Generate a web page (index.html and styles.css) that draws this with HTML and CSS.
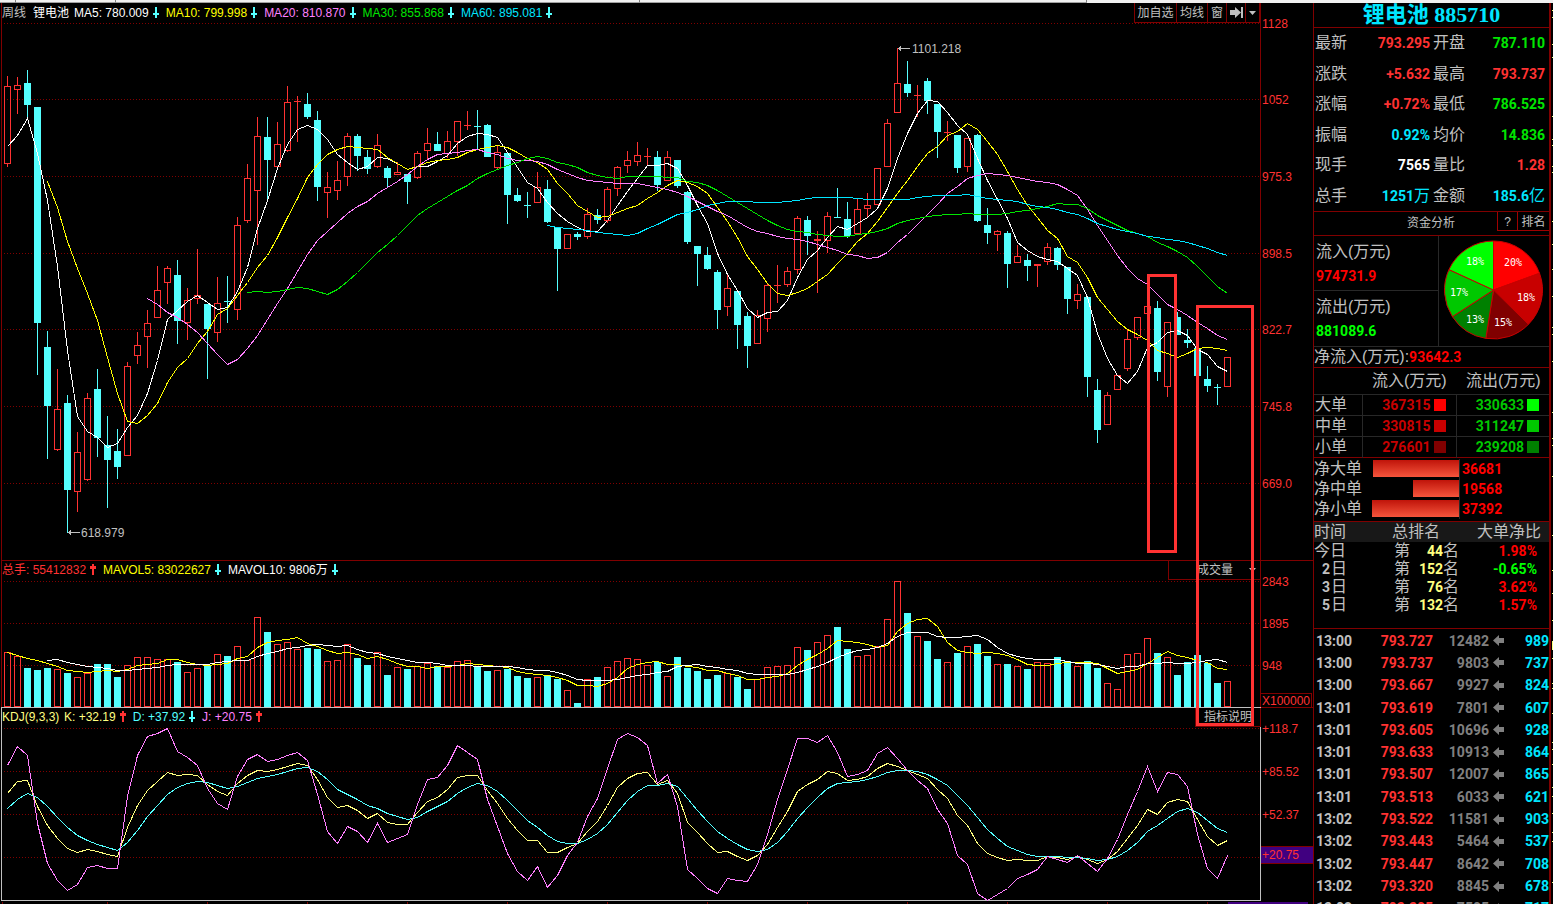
FILE: index.html
```html
<!DOCTYPE html>
<html lang="zh-CN">
<head>
<meta charset="utf-8">
<title>锂电池 885710</title>
<link rel="stylesheet" href="styles.css">
</head>
<body>
<svg class="defs" aria-hidden="true">
  <symbol id="down" viewBox="0 0 7 12"><path d="M3 0h2v6h2v2H5v3H3V8H1V6h2z" fill="#54ffff"/></symbol>
  <symbol id="up" viewBox="0 0 7 12"><path d="M3 0h2v2h2v3H5v6H3V5H1V2h2z" fill="#ff3232"/></symbol>
  <symbol id="back" viewBox="0 0 12 11"><path d="M0 5.5 6 0v3h5v5H6v3z" fill="#808080"/></symbol>
</svg>
<div class="strip"><i></i><i></i><i></i><i></i></div>
<div class="app">
  <main class="charts">
    <section class="pane">
      <svg id="price" class="plot" viewBox="0 3 1313 557"></svg>
      <header class="legend">
        <span class="gray period">周线</span><span class="white name">锂电池</span>
        <span class="item white">MA5: 780.009<svg class="arr"><use href="#down"/></svg></span>
        <span class="item yellow">MA10: 799.998<svg class="arr"><use href="#down"/></svg></span>
        <span class="item pink">MA20: 810.870<svg class="arr"><use href="#down"/></svg></span>
        <span class="item green">MA30: 855.868<svg class="arr"><use href="#down"/></svg></span>
        <span class="item aqua">MA60: 895.081<svg class="arr"><use href="#down"/></svg></span>
      </header>
      <nav class="tools">
        <button class="wide">加自选</button><button class="mid">均线</button><button class="small">窗</button>
        <button class="small" aria-label="最新"><svg width="13" height="11"><path d="M0 3h5V0l6 5.5L5 11V8H0zM11 0h2v11h-2z" fill="#c0c0c0"/></svg></button>
        <button class="tiny" aria-label="更多"><svg width="7" height="4"><path d="M0 0h7L3.5 4z" fill="#c0c0c0"/></svg></button>
      </nav>
    </section>
    <section class="pane">
      <svg id="volume" class="plot" viewBox="0 560 1313 147"></svg>
      <header class="legend">
        <span class="item red">总手: 55412832<svg class="arr"><use href="#up"/></svg></span>
        <span class="item yellow">MAVOL5: 83022627<svg class="arr"><use href="#down"/></svg></span>
        <span class="item white">MAVOL10: 9806万<svg class="arr"><use href="#down"/></svg></span>
      </header>
      <div class="picker">
        <select aria-label="指标"><option>成交量</option></select>
        <svg width="7" height="4"><path d="M0 0h7L3.5 4z" fill="#c0c0c0"/></svg>
      </div>
    </section>
    <section class="pane">
      <svg id="kdj" class="plot" viewBox="0 707 1313 197"></svg>
      <header class="legend">
        <span class="cream kdj">KDJ(9,3,3)</span>
        <span class="item cream">K: +32.19<svg class="arr"><use href="#up"/></svg></span>
        <span class="item cyan">D: +37.92<svg class="arr"><use href="#down"/></svg></span>
        <span class="item pink">J: +20.75<svg class="arr"><use href="#up"/></svg></span>
      </header>
      <button class="explain">指标说明</button>
    </section>
    <svg class="marks" viewBox="0 3 1313 901">
      <rect x="1148.5" y="275.5" width="27" height="276"/>
      <rect x="1197.5" y="306.5" width="55" height="418"/>
    </svg>
  </main>
  <aside class="side">
    <h1>锂电池 885710</h1>
    <dl class="quote">
      <dt>最新</dt><dd class="red">793.295</dd><dt>开盘</dt><dd class="green">787.110</dd>
      <dt>涨跌</dt><dd class="red">+5.632</dd><dt>最高</dt><dd class="red">793.737</dd>
      <dt>涨幅</dt><dd class="red">+0.72%</dd><dt>最低</dt><dd class="green">786.525</dd>
      <dt>振幅</dt><dd class="aqua">0.92%</dd><dt>均价</dt><dd class="green">14.836</dd>
      <dt>现手</dt><dd class="white">7565</dd><dt>量比</dt><dd class="red">1.28</dd>
      <dt>总手</dt><dd class="aqua">1251<span class="unit">万</span></dd><dt>金额</dt><dd class="aqua">185.6<span class="unit">亿</span></dd>
    </dl>
    <div class="tabs"><span>资金分析</span><button class="help">?</button><button class="rank-btn">排名</button></div>
    <div class="flow">
      <div class="flow-in"><span>流入(万元)</span><b class="pure-red">974731.9</b></div>
      <div class="flow-out"><span>流出(万元)</span><b class="pure-green">881089.6</b></div>
      <svg id="pie" class="pie" width="110" height="110"></svg>
    </div>
    <div class="net">净流入(万元):<b class="pure-red">93642.3</b></div>
    <table class="orders">
      <thead><tr><th></th><th>流入(万元)</th><th>流出(万元)</th></tr></thead>
      <tbody>
        <tr><th>大单</th><td class="in">367315<i class="r1"></i></td><td class="out">330633<i class="g1"></i></td></tr>
        <tr><th>中单</th><td class="in">330815<i class="r2"></i></td><td class="out">311247<i class="g2"></i></td></tr>
        <tr><th>小单</th><td class="in">276601<i class="r3"></i></td><td class="out">239208<i class="g3"></i></td></tr>
      </tbody>
    </table>
    <div class="nets">
      <div><span>净大单</span><span class="track"><i style="width:86px"></i></span><b>36681</b></div>
      <div><span>净中单</span><span class="track"><i style="width:46px"></i></span><b>19568</b></div>
      <div><span>净小单</span><span class="track"><i style="width:87px"></i></span><b>37392</b></div>
    </div>
    <table class="ranks">
      <thead><tr><th>时间</th><th class="c">总排名</th><th class="r">大单净比</th></tr></thead>
      <tbody>
        <tr><td>今日</td><td class="c"><span class="place">第<b>44</b>名</span></td><td class="r pure-red">1.98%</td></tr>
        <tr><td class="n"><b>2</b>日</td><td class="c"><span class="place">第<b>152</b>名</span></td><td class="r pure-green">-0.65%</td></tr>
        <tr><td class="n"><b>3</b>日</td><td class="c"><span class="place">第<b>76</b>名</span></td><td class="r pure-red">3.62%</td></tr>
        <tr><td class="n"><b>5</b>日</td><td class="c"><span class="place">第<b>132</b>名</span></td><td class="r pure-red">1.57%</td></tr>
      </tbody>
    </table>
    <div id="ticks" class="ticks"></div>
  </aside>
  <svg class="edge" aria-hidden="true"><path d="M1.5 7v1m0 6v1m0 26v1m0 12v1m0 58v1m0 22v1m0 5v1m0 20v1m0 5v1m0 48v1m0 22v1m0 24v1m0 26v1m0 30v1m0 6v1m0 26v1m0 50v1m0 25v1m0 6v1m0 30v1m0 58v1m0 34v1m0 22v1m0 26v1m0 20v9m0 8v1m0 24v1m0 4v1m0 24v1m0 28v1m0 6v1m0 14v1m0 22v1m0 8v1m0 16v1m0 18v1m0 8v1m0 40v1"/></svg>
</div>
<script src="chart.js"></script>
</body>
</html>
```
FILE: styles.css
```css
* { box-sizing: border-box; }
body {
  margin: 0;
  height: 100vh;
  overflow: hidden;
  background: #000;
  color: #c0c0c0;
  font: 12px/18px "Liberation Sans", "Noto Sans CJK SC", sans-serif;
}
button, select {
  margin: 0;
  padding: 0;
  background: transparent;
  border: 0;
  color: #c0c0c0;
  font: inherit;
}
.defs { position: absolute; width: 0; height: 0; }
.red { color: #ff3232; }
.green { color: #00e600; }
.pure-red { color: #ff0000; }
.pure-green { color: #00ff00; }
.yellow { color: #ffff00; }
.pink { color: #ff80ff; }
.aqua { color: #00e6ff; }
.cyan { color: #54ffff; }
.cream { color: #ffff80; }
.white { color: #ffffff; }
.gray { color: #c0c0c0; }

.strip { display: flex; height: 3px; background: #f0f0f0; }
.strip i { flex: 0 0 auto; border-bottom: 1px solid #a0a0a0; border-right: 1px solid #808080; }
.strip i:nth-child(1) { width: 16px; }
.strip i:nth-child(2) { width: 100px; }
.strip i:nth-child(3) { width: 524px; }
.strip i:nth-child(4) { width: 447px; }

.app { display: grid; grid-template-columns: minmax(0, 1fr) 238px 2px; height: calc(100vh - 3px); }
.charts { position: relative; }
.pane { position: relative; }
.plot { display: block; width: 100%; height: auto; font-size: 12px; }
.plot rect, .plot path, .plot polyline { shape-rendering: crispEdges; }
.marks { position: absolute; left: 0; top: 0; width: 100%; height: auto; pointer-events: none; }
.marks rect { fill: none; stroke: #ff3232; stroke-width: 3; shape-rendering: crispEdges; }

.legend { position: absolute; left: 2px; top: 1px; display: flex; white-space: nowrap; }
.period { width: 31px; }
.name { width: 41px; }
.kdj { width: 62px; }
.item { display: flex; align-items: center; margin-right: 7px; }
.arr { width: 7px; height: 12px; margin-left: 3px; }

.tools { position: absolute; right: 53px; top: 0; display: flex; height: 20px; border: 1px solid #800000; border-top: 0; }
.tools button { display: flex; align-items: center; justify-content: center; border-left: 1px solid #800000; }
.tools button:first-child { border-left: 0; }
.tools .wide { width: 41px; }
.tools .mid { width: 31px; }
.tools .small { width: 19px; }
.tools .tiny { width: 14px; }
.picker { position: absolute; right: 52px; top: 0; width: 93px; height: 20px; border: 1px solid #800000; display: flex; align-items: center; }
.picker select { flex: 1; appearance: none; padding-left: 28px; outline: 0; }
.picker svg { margin-right: 4px; }
.explain { position: absolute; right: 52px; top: 1px; width: 66px; height: 19px; border: 1px solid #800000; border-top: 0; text-align: right; padding-right: 8px; }

.side { border-left: 1px solid #800000; border-right: 2px solid #800000; font-size: 16px; line-height: 20px; overflow: hidden; }
.side b, .quote dd, .orders td, .ranks .r, .ticks { font-family: Roboto, "Noto Sans CJK SC", sans-serif; font-weight: 700; font-size: 14px; }
h1 { margin: 0; height: 25px; border-bottom: 1px solid #800000; text-align: center; font: 700 22px/24px "Liberation Serif", "Noto Sans CJK SC", serif; color: #00e6ff; }
.quote { margin: 0; height: 184px; padding: 0 4px 0 1px; display: grid; grid-template-columns: 34px 1fr 36px 79px; grid-template-rows: repeat(6, 1fr); align-items: center; border-bottom: 1px solid #800000; }
.quote dd { margin: 0; text-align: right; }
.quote dt:nth-of-type(even) { padding-left: 3px; }
.unit { font-size: 16px; font-weight: 400; }
.tabs { display: flex; height: 24px; border-bottom: 1px solid #800000; font-size: 12px; }
.tabs span { flex: 1; text-align: right; padding-right: 42px; line-height: 23px; }
.tabs button { height: 19px; border: 1px solid #a00000; border-top: 0; border-right: 0; }
.help { width: 20px; }
.rank-btn { width: 32px; }
.flow { display: grid; grid-template-columns: 125px 1fr; grid-template-rows: 55px 55px; border-bottom: 1px solid #282828; }
.flow > div { border-right: 1px solid #282828; padding: 6px 0 0 2px; display: flex; flex-direction: column; gap: 4px; }
.flow .flow-in { border-bottom: 1px solid #282828; }
.flow-out { grid-row: 2; }
.pie { grid-column: 2; grid-row: 1 / 3; font: 10px "DejaVu Sans Mono", monospace; }
.net { height: 21px; border-bottom: 1px solid #800000; white-space: nowrap; line-height: 20px; }
table { border-collapse: collapse; border-spacing: 0; table-layout: fixed; width: 100%; }
th { font-weight: 400; text-align: left; }
th, td { padding: 0; }
.orders { border-bottom: 1px solid #800000; }
.orders th:first-child { width: 48px; padding-left: 1px; }
.orders th:nth-child(2) { width: 94px; }
.orders thead th { height: 26px; padding-left: 10px; white-space: nowrap; }
.orders tbody th, .orders td { height: 21px; line-height: 18px; border-top: 1px solid #282828; }
.orders td { border-left: 1px solid #282828; text-align: right; white-space: nowrap; }
.orders .in { color: #c80000; padding-right: 10px; }
.orders .out { color: #00c800; padding-right: 10px; }
.orders i { display: inline-block; width: 12px; height: 12px; margin-left: 3px; vertical-align: -1px; }
.r1 { background: #ff0000; } .r2 { background: #c80000; } .r3 { background: #800000; }
.g1 { background: #00ff00; } .g2 { background: #00c800; } .g3 { background: #008000; }
.nets { padding: 1px 0 2px; border-bottom: 1px solid #800000; }
.nets > div { display: grid; grid-template-columns: 50px 96px 1fr; height: 20px; align-items: center; }
.track { display: flex; justify-content: flex-end; align-items: center; height: 20px; border-right: 1px solid #282828; }
.track i { height: 17px; background: linear-gradient(#c0140a, #f5553c); }
.nets b { color: #ff0000; padding-left: 2px; }
.ranks thead { background: #181818; }
.ranks thead th { height: 19px; }
.ranks th, .ranks td { height: 18px; line-height: 18px; }
.ranks th:nth-child(1) { width: 62px; }
.ranks th:nth-child(2) { width: 84px; }
.ranks .c { padding-left: 16px; }
.ranks td.c { padding-left: 18px; }
.ranks .r { text-align: right; padding-right: 12px; }
.ranks th.r { font: inherit; padding-right: 8px; }
.ranks .n { padding-left: 8px; }
.ranks .n b { margin-right: 1px; }
.ranks td.c { color: #c0c0c0; }
.place { display: flex; width: 65px; }
.place b { flex: 1; text-align: right; color: #ffff80; }
.ticks { margin-top: 14px; border-top: 1px solid #800000; height: 292px; display: grid; grid-template-rows: repeat(13, 1fr); padding: 1px 0 0 2px; }
.tick { display: grid; grid-template-columns: 50px 67px 56px 1fr; align-items: center; }
.tick span { text-align: right; }
.tick .time { text-align: left; }
.tick .lot { color: #808080; }
.tick .cnt { color: #00e6ff; display: flex; justify-content: space-between; align-items: center; padding-left: 4px; }
.edge { width: 2px; height: 100%; }
.edge path { stroke: #ffff80; stroke-width: 1; fill: none; }
```
FILE: chart.js
```js
const RED = '#ff3232', CYAN = '#54ffff', GRID = '#800000';
const X = i => 7 + i * 10;

// colour, high, body top, body bottom, low
const candles = `r 76 86 164 167,r 77 85 90 114,c 70 83 105 118,c 107 107 323 375,c 331 347 406 459,r 369 409 450 451,c 395 403 490 533,r 432 452 492 512,r 393 398 480 481,c 369 389 438 457,
c 416 445 460 508,c 429 451 467 479,r 362 366 456 456,r 332 345 356 364,r 310 323 337 368,r 266 290 318 318,r 266 268 283 304,c 260 275 321 344,r 288 300 323 340,r 249 295 299 304,
c 304 304 329 379,r 277 303 333 342,c 276 301 302 323,r 217 225 310 320,r 164 178 221 223,r 117 136 191 245,c 117 137 160 200,r 122 144 167 167,r 86 102 151 152,r 96 101 102 142,
c 93 104 117 119,c 111 120 187 201,r 172 187 193 218,r 161 180 191 200,r 133 136 177 186,c 134 136 156 171,c 150 157 169 174,r 134 145 167 168,c 166 168 178 188,r 162 172 175 175,
c 174 174 182 204,r 151 153 178 179,r 128 143 151 160,c 132 144 151 151,r 131 141 154 158,r 121 121 142 156,r 111 125 126 130,c 110 126 127 150,c 124 125 157 157,r 146 152 168 170,
c 152 153 195 224,c 188 195 201 202,c 192 205 206 218,r 172 187 203 203,c 180 189 222 223,c 227 227 249 291,r 234 234 249 249,c 232 234 237 240,r 208 214 237 239,c 209 215 220 224,
r 187 189 221 223,r 166 167 189 196,r 151 160 166 173,r 142 155 162 166,r 148 156 157 166,c 151 157 185 191,r 151 157 181 181,c 160 160 186 188,c 191 192 242 244,c 246 246 254 286,
c 247 255 269 270,c 270 272 310 329,r 275 288 307 316,c 291 291 325 349,c 312 316 346 368,r 310 315 344 344,r 283 285 319 332,r 265 285 286 303,r 267 271 285 287,r 216 218 270 274,
c 216 220 236 255,r 231 239 241 293,r 212 216 241 253,c 188 217 218 218,c 202 219 236 238,r 199 209 234 234,r 193 205 209 218,r 168 168 205 205,r 119 123 167 167,r 48 83 113 113,
c 61 84 93 97,r 85 95 96 117,c 78 81 101 114,c 104 104 132 158,r 121 132 133 141,c 135 135 168 173,r 138 138 167 172,c 134 135 221 222,c 208 225 233 244,r 230 231 235 251,
c 231 233 264 288,r 245 256 263 263,c 254 260 266 281,r 264 264 266 287,r 243 247 262 265,c 247 248 265 270,c 267 267 299 314,r 284 294 301 309,c 297 297 377 397,c 379 390 430 443,
r 392 395 425 425,r 375 375 390 390,r 330 339 369 371,r 317 317 338 340,r 306 306 314 314,c 301 308 372 381,r 322 322 387 397,c 312 317 335 335,c 329 340 343 348,c 348 348 376 376,
c 366 379 386 392,c 384 387 388 405,r 357 357 387 387`.split(',').map(s => {
  const [c, ...n] = s.trim().split(' ');
  return [c, ...n.map(Number)];
});

const nums = s => s.trim().split(/\s+/).map(Number);
const ma5 = nums(`146 135 118 153 200 266 350 416 431 437 447 443 427 415 393 360 319 310 301 295 302 309 307 291 267 228 200 168 144 129
125 129 139 154 162 169 166 157 158 163 169 166 166 161 155 143 136 133 134 137 152 167 182 188 202 213 221 227 231 231
220 205 191 178 165 165 163 168 185 205 223 253 274 290 308 317 312 311 300 277 259 250 237 226 229 223 217 208 188 158
133 113 100 101 112 125 134 158 180 199 218 242 250 256 259 261 268 275 297 333 358 375 383 371 347 342 332 330 335 349 354 366 371`);
const ma10 = nums(`181 207 241 268 293 320 357 393 421 423 415 403 382 367 358 343 331 314 308 295 282 267 255 237 217 198
177 164 154 149 146 147 148 149 157 163 169 166 162 160 159 157 152 149 147 145 147 152 158 162 169 183 193 205 211 217
216 212 208 205 198 192 185 180 182 186 193 207 221 237 256 269 283 293 295 292 288 281 274 263 253 241 233 221 207 193
180 166 153 146 135 131 123 129 141 154 171 189 205 217 230 238 256 262 277 297 309 321 329 334 340 350 353 357 353 348 347 348 350`);
const ma20 = nums(`298 304 312 317 324 332 343 354 364 359 348 335 319 303 288 271 254 240 231 222 213 206 201 193 187 181
174 166 159 154 153 152 150 149 152 154 158 160 160 161 164 169 173 177 180 181 182 183 183 183 185 187 189 192 196 201
206 211 215 221 227 231 233 236 238 239 241 244 247 250 254 255 258 257 252 242 234 224 214 204 193 186 178 175 173 174
175 177 179 181 182 184 189 195 209 225 240 255 268 278 284 294 304 309 315 322 328 335 339`);
const ma30 = nums(`292 291 292 291 289 287 288 291 294 289 281 272 262 252 244 235 225 215 208 202 196 190 185 178 173 169
165 162 158 156 158 162 164 167 172 175 177 178 176 176 176 176 177 177 181 182 185 190 196 202 208 214 220 225 229 231
232 234 235 236 236 234 233 231 228 223 220 218 216 215 214 214 213 214 214 214 213 211 210 208 206 203 204 204 208 215
220 225 230 233 236 242 246 251 257 266 276 286 293`);
const ma60 = nums(`225 227 228 229 230 232 233 234 235 233 228 224 219 214 212 209 205 203 201 201 201 202 202 202 201 200
198 197 197 197 197 198 199 199 199 199 199 197 196 195 195 195 194 196 198 199 200 201 204 206 207 209 212 214 218 223
226 229 231 233 236 237 239 240 242 245 248 252 255`);
const vol = nums(`652 656 668 670 668 669 673 677 673 664 664 677 665 657 657 659 659 662 672 668 665 654 656 646 660 617 632 644 642 649
648 649 661 660 644 658 665 652 675 667 669 666 663 666 667 661 660 667 671 670 669 676 678 677 675 679 690 703 679 677
667 661 658 659 665 662 676 657 668 671 679 675 673 677 689 679 667 666 665 647 650 642 635 627 649 656 655 646 619 581
613 636 641 659 662 653 646 644 656 664 664 666 669 662 663 657 661 666 661 668 683 689 654 653 638 653 657 675 662 655 663 683 681`);
const j = nums(`765 746 755 823 863 880 890 884 867 865 868 868 796 755 736 733 728 751 757 765 788 803 809 776 759 754 761 759 755 752
760 794 831 843 826 831 842 823 842 838 834 804 779 777 765 745 752 759 799 826 853 871 880 866 887 875 855 842 816 798
768 739 733 737 745 783 774 806 869 878 888 893 878 880 881 864 834 799 769 738 738 742 735 752 776 774 770 753 747 758
770 780 788 809 823 855 864 893 900 894 888 878 874 869 856 859 862 855 863 871 858 839 814 791 766 791 772 774 786 834 868 878 855`);

const line = (ys, start, color) =>
  `<polyline fill="none" stroke="${color}" points="${ys.map((y, k) => `${X(k + start) + .5},${Math.round(y) + .5}`).join(' ')}"/>`;
const grid = ys => ys.map(y => `<path d="M4 ${y + .5}H1260" stroke="${GRID}" stroke-dasharray="1 2"/>`).join('');
const label = (y, t) => `<text x="1262" y="${y + 5}" fill="${RED}">${t}</text>`;
const rule = (d, c = GRID) => `<path d="${d}" fill="none" stroke="${c}"/>`;
const hollow = (x, t, b) => b - t < 2
  ? `<rect x="${x - 3}" y="${t}" width="7" height="${b - t}" fill="${RED}"/>`
  : `<rect x="${x - 2.5}" y="${t + .5}" width="6" height="${b - t - 1}" fill="none" stroke="${RED}"/>`;
const solid = (x, t, b) => `<rect x="${x - 3}" y="${t}" width="7" height="${b - t}" fill="${CYAN}"/>`;

const bodies = candles.map(([c, h, t, b, l], i) => {
  const x = X(i), col = c === 'r' ? RED : CYAN;
  return rule(`M${x + .5} ${h}V${t}M${x + .5} ${b}V${l}`, col) + (c === 'r' ? hollow(x, t, b) : solid(x, t, b));
}).join('');

document.getElementById('price').innerHTML =
  grid([23, 99, 176, 253, 329, 406, 483]) + rule('M1.5 3V560M1260.5 3V560') + bodies +
  line(ma5, 0, '#fff') + line(ma10, 4, '#ff0') + line(ma20, 14, '#ff80ff') + line(ma30, 24, '#00e600') + line(ma60, 54, '#00e6ff') +
  [[23, '1128'], [99, '1052'], [176, '975.3'], [253, '898.5'], [329, '822.7'], [406, '745.8'], [483, '669.0']].map(a => label(...a)).join('') +
  rule('M898 48.5H910M900.5 46V51M899.5 47V50', '#c0c0c0') + '<text x="912" y="53" fill="#c0c0c0">1101.218</text>' +
  rule('M68 532.5H80M70.5 530V535M69.5 531V534', '#c0c0c0') + '<text x="81" y="537" fill="#c0c0c0">618.979</text>';

const mean = n => vol.map((_, i) => i < n - 1 ? 0 : vol.slice(i - n + 1, i + 1).reduce((a, b) => a + b) / n).slice(n - 1);
document.getElementById('volume').innerHTML =
  rule('M1 560.5H1313M1.5 560V707M1260.5 560V707') + grid([581, 623, 665]) +
  candles.map(([c], i) => c === 'r' ? hollow(X(i), vol[i], 707) : solid(X(i), vol[i], 707)).join('') +
  line([652, 655, 658, 660, ...mean(5)], 0, '#ff0') + line([660, 659, 662, 664, 666, ...mean(10)], 4, '#fff') +
  label(581, '2843') + label(623, '1895') + label(665, '948') +
  rule('M1261 693.5H1311.5V707') + label(700, 'X100000');

const d = [];
j.forEach((v, i) => d.push(i ? (6 * d[i - 1] + v) / 7 : 807.7));
const k = j.map((v, i) => (v + 2 * d[i]) / 3);
document.getElementById('kdj').innerHTML =
  grid([728, 771, 814, 857]) + rule('M1260 707.5H1313') + rule('M1.5 900.5V707.5H1260.5V900.5Z', '#c0c0c0') +
  line(k, 0, '#ffff80') + line(d, 0, CYAN) + line(j, 0, '#ff80ff') +
  '<rect x="1261" y="846" width="52" height="17" fill="#400080"/>' + rule('M1261 846.5H1313M1261 863.5H1313') +
  label(728, '+118.7') + label(771, '+85.52') + label(814, '+52.37') + label(854, '+20.75') +
  rule([2, 107, 207, 307, 407, 507, 607, 707, 807, 907, 1007, 1107, 1207].map(x => `M${x + .5} 902V904`).join('')) +
  '<rect x="1228" y="902" width="80" height="2" fill="#400080"/>';

// pie slices: end angle, fill, label, label centre
const slices = [[70, '#ff0000', '20%', 74, 26], [134.5, '#c80000', '18%', 87, 61], [189, '#800000', '15%', 64, 86],
  [237, '#008000', '13%', 36, 83], [294.6, '#00c800', '17%', 20, 56], [360, '#00ff00', '18%', 36, 25]];
const at = a => `${(54.5 + 49 * Math.sin(a * Math.PI / 180)).toFixed(2)} ${(54 - 49 * Math.cos(a * Math.PI / 180)).toFixed(2)}`;
let from = 0, pie = '', tags = '';
for (const [to, fill, t, x, y] of slices) {
  pie += `<path d="M54.5 54L${at(from)}A49 49 0 0 1 ${at(to)}Z" fill="${fill}" stroke="#c80000"/>`;
  tags += `<text x="${x}" y="${y + 4}" fill="#fff" text-anchor="middle">${t}</text>`;
  from = to;
}
document.getElementById('pie').innerHTML = pie + tags;

document.getElementById('ticks').innerHTML = `13:00 793.727 12482 989,13:00 793.737 9803 737,13:00 793.667 9927 824,13:01 793.619 7801 607,13:01 793.605 10696 928,13:01 793.633 10913 864,13:01 793.507 12007 865,13:01 793.513 6033 621,13:02 793.522 11581 903,13:02 793.443 5464 537,13:02 793.447 8642 708,13:02 793.320 8845 678,13:02 793.305 7505 717`
  .split(',').map(r => {
    const [time, price, lot, cnt] = r.split(' ');
    return `<div class="tick"><span class="time">${time}</span><span class="red">${price}</span><span class="lot">${lot}</span><span class="cnt"><svg width="12" height="11"><use href="#back"/></svg>${cnt}</span></div>`;
  }).join('');
```
